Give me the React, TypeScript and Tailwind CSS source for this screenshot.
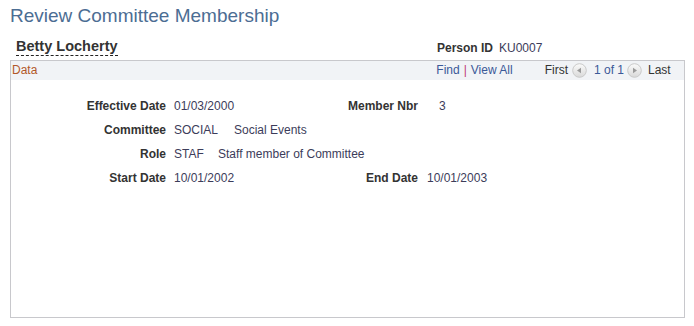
import React from "react";

function NavBtn({ dir }: { dir: "left" | "right" }) {
  return (
    <svg width="15" height="15" viewBox="0 0 15 15" className="inline-block">
      <defs>
        <linearGradient id={`g-${dir}`} x1="0" y1="0" x2="0" y2="1">
          <stop offset="0" stopColor="#fbfbfb" />
          <stop offset="1" stopColor="#d8d8d8" />
        </linearGradient>
      </defs>
      <circle cx="7.5" cy="7.5" r="6.8" fill={`url(#g-${dir})`} stroke="#c9c9c9" strokeWidth="1" />
      {dir === "left" ? (
        <path d="M5 7.5 L9 4.8 L9 10.2 Z" fill="#9a9a9a" />
      ) : (
        <path d="M10 7.5 L6 4.8 L6 10.2 Z" fill="#9a9a9a" />
      )}
    </svg>
  );
}

export default function App() {
  const font = { fontFamily: '"Liberation Sans", Arial, sans-serif' };
  return (
    <div className="w-[694px] h-[326px] bg-white text-[#333333] overflow-hidden" style={font}>
      <div className="pl-[10px] pt-[5px] text-[19px] leading-[22px] text-[#4c6d93]">
        Review Committee Membership
      </div>
      <div className="mt-[12px] flex items-end h-[19px]">
        <div className="ml-[16px] w-[421px]">
          <span className="inline-block font-bold text-[14.5px] leading-[16px] pt-[1px] pb-[1px] border-b border-dashed border-[#222] text-[#333]">
            Betty Locherty
          </span>
        </div>
        <div className="flex text-[12px] leading-[16px] pb-[2px]">
          <span className="font-bold">Person ID</span>
          <span className="ml-[6px] text-[#3c3c5a]">KU0007</span>
        </div>
      </div>
      <div className="mt-[2px] ml-[10px] w-[675px] h-[258px] border border-[#c8c8cc]">
        <div className="h-[19px] bg-[#f1f3f6] flex items-center text-[12px] leading-[19px]">
          <span className="ml-[1px] text-[#b1582a]">Data</span>
          <div className="ml-[399px] flex items-center text-[#3b5998]">
            <span>Find</span>
            <span className="mx-[4px] text-[#c0397a]">|</span>
            <span>View All</span>
          </div>
          <div className="ml-[32px] flex items-center text-[#3b5998]">
            <span className="text-[#333]">First</span>
            <span className="ml-[4px] flex"><NavBtn dir="left" /></span>
            <span className="ml-[7px]">1 of 1</span>
            <span className="ml-[3px] flex"><NavBtn dir="right" /></span>
            <span className="ml-[6px] text-[#333]">Last</span>
          </div>
        </div>
        <div className="mt-[14px] text-[12px] leading-[24px]">
          <div className="flex">
            <span className="w-[155px] text-right font-bold">Effective Date</span>
            <span className="ml-[8px] w-[164px] text-[#3c3c5a]">01/03/2000</span>
            <span className="w-[80px] text-right font-bold">Member Nbr</span>
            <span className="ml-[21px] text-[#3c3c5a]">3</span>
          </div>
          <div className="flex">
            <span className="w-[155px] text-right font-bold">Committee</span>
            <span className="ml-[8px] w-[60px] text-[#3c3c5a]">SOCIAL</span>
            <span className="text-[#3c3c5a]">Social Events</span>
          </div>
          <div className="flex">
            <span className="w-[155px] text-right font-bold">Role</span>
            <span className="ml-[8px] w-[44px] text-[#3c3c5a]">STAF</span>
            <span className="text-[#3c3c5a]">Staff member of Committee</span>
          </div>
          <div className="flex">
            <span className="w-[155px] text-right font-bold">Start Date</span>
            <span className="ml-[8px] w-[164px] text-[#3c3c5a]">10/01/2002</span>
            <span className="w-[80px] text-right font-bold">End Date</span>
            <span className="ml-[9px] text-[#3c3c5a]">10/01/2003</span>
          </div>
        </div>
      </div>
    </div>
  );
}
